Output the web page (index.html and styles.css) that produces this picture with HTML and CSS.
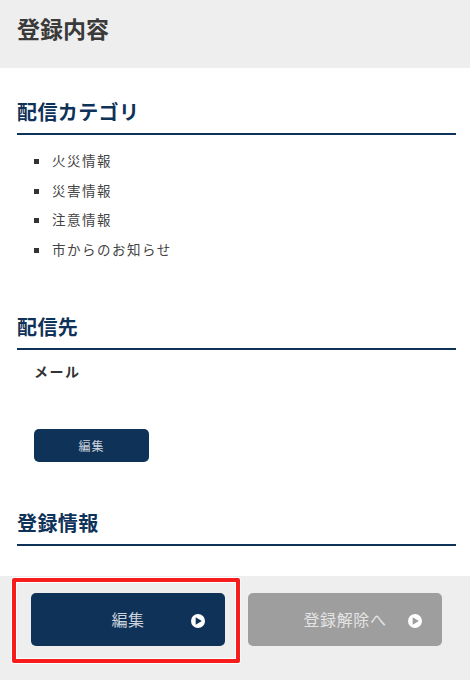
FILE: index.html
```html
<!DOCTYPE html>
<html lang="ja">
<head>
    <meta charset="UTF-8">
    <meta name="viewport" content="width=device-width, initial-scale=1.0">
    <title>登録内容</title>
    <link rel="stylesheet" href="styles.css">
</head>
<body>

    <div class="page">
        <header class="page-header">
            <h1>登録内容</h1>
        </header>

        <main class="content">
            <section class="section section-category">
                <h2>配信カテゴリ</h2>
                <ul class="category-list">
                    <li>火災情報</li>
                    <li>災害情報</li>
                    <li>注意情報</li>
                    <li>市からのお知らせ</li>
                </ul>
            </section>

            <section class="section section-address">
                <h2>配信先</h2>
                <p class="address-type">メール</p>
                <button type="button" class="edit-button">編集</button>
            </section>

            <section class="section section-info">
                <h2>登録情報</h2>
            </section>
        </main>

        <footer class="page-footer">
            <button type="button" class="action-button action-primary">
                <span>編集</span>
                <svg class="play-icon" viewBox="0 0 14 14"><circle cx="7" cy="7" r="7" fill="#fff"/><path d="M4.7 3.3 L10.8 7 L4.7 10.7 Z" fill="currentColor"/></svg>
            </button>
            <button type="button" class="action-button action-disabled">
                <span>登録解除へ</span>
                <svg class="play-icon" viewBox="0 0 14 14"><circle cx="7" cy="7" r="7" fill="#fff"/><path d="M4.7 3.3 L10.8 7 L4.7 10.7 Z" fill="currentColor"/></svg>
            </button>
            <div class="highlight-box"></div>
        </footer>
    </div>

</body>
</html>
```

FILE: styles.css
```css
body {
    font-family: "Noto Sans CJK JP", "Liberation Sans", sans-serif;
    margin: 0;
    background-color: white;
    color: #333;
}
.page {
    display: flex;
    flex-direction: column;
    height: 680px;
    overflow: hidden;
}
.page-header {
    background-color: #eee;
    height: 68px;
    padding: 0 17px;
    box-sizing: border-box;
    display: flex;
    align-items: center;
}
.page-header h1 {
    margin: 0 0 12px;
    font-size: 23px;
    font-weight: 700;
    line-height: 30px;
    color: #3a3a3a;
}
.content {
    flex: 1;
    padding: 0 14px 0 17px;
}
.section h2 {
    margin: 0;
    height: 35px;
    border-bottom: 2px solid #0f3259;
    font-size: 20px;
    font-weight: 700;
    line-height: 28px;
    letter-spacing: 0.4px;
    color: #0f3259;
}
.section-category {
    padding-top: 30px;
}
.category-list {
    list-style: none;
    margin: 11px 0 0;
    padding: 0 0 0 17px;
}
.category-list li {
    font-size: 13.5px;
    line-height: 29.6px;
    letter-spacing: 1.5px;
    color: #444;
}
.category-list li::before {
    content: "";
    display: inline-block;
    width: 5px;
    height: 5px;
    margin-right: 13px;
    vertical-align: 2px;
    background-color: #333;
}
.section-address {
    padding-top: 49px;
}
.address-type {
    margin: 9px 0 0 17px;
    font-size: 14px;
    font-weight: 700;
    line-height: 24px;
    letter-spacing: 1.5px;
    color: #333;
}
.edit-button {
    display: block;
    width: 115px;
    height: 33px;
    margin: 46px 0 0 17px;
    border: none;
    border-radius: 5px;
    background-color: #0f3259;
    color: #ccd3dc;
    font-family: inherit;
    font-size: 12px;
    letter-spacing: 1px;
}
.section-info {
    padding-top: 47px;
}
.page-footer {
    position: relative;
    background-color: #eee;
    height: 104px;
    box-sizing: border-box;
    padding: 17px 0 0 31px;
    display: flex;
    gap: 23px;
    align-items: flex-start;
}
.action-button {
    position: relative;
    width: 194px;
    height: 53px;
    border: none;
    border-radius: 5px;
    font-family: inherit;
    font-size: 16px;
    letter-spacing: 0.6px;
    padding: 0;
}
.action-button span {
    display: block;
    margin-top: -2px;
}
.action-primary {
    background-color: #0f3259;
    color: #ccd3dc;
}
.action-disabled {
    background-color: #9e9e9e;
    color: #e4e4e4;
}
.play-icon {
    position: absolute;
    right: 20px;
    top: 21px;
    width: 14px;
    height: 14px;
}
.action-primary .play-icon {
    color: #0f3259;
}
.action-disabled .play-icon {
    color: #9e9e9e;
}
.highlight-box {
    position: absolute;
    left: 12px;
    top: 2px;
    width: 228px;
    height: 85px;
    box-sizing: border-box;
    border: 4px solid #f81d1d;
    border-radius: 2px;
    box-shadow: 0 0 0 1px #fff, inset 0 0 0 1px #fff;
}
```
